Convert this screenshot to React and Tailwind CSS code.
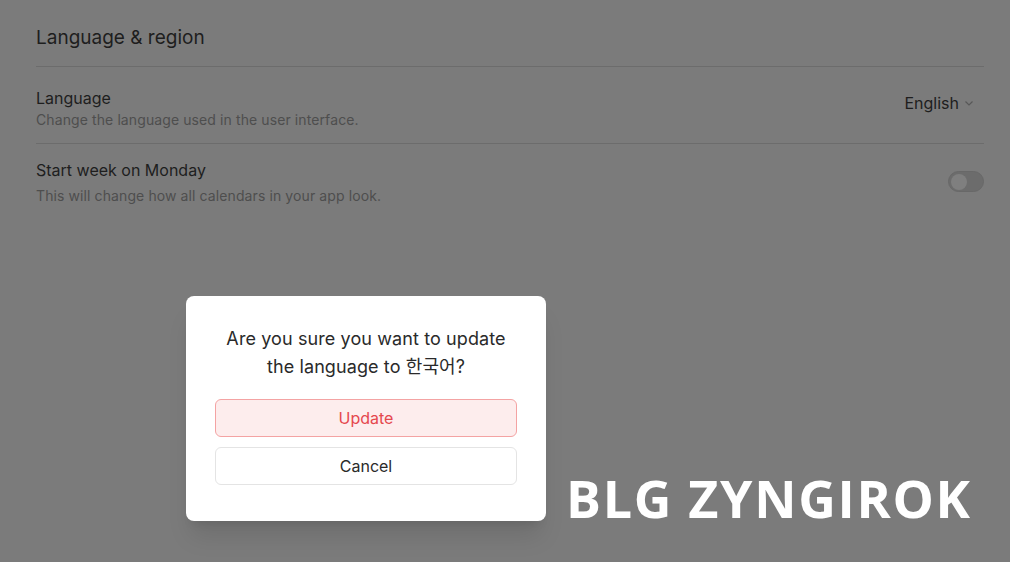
export default function App() {
  return (
    <div className="relative h-[562px] w-[1010px] overflow-hidden bg-[#7b7b7b] font-['Inter','Noto_Sans_CJK_KR',sans-serif]">
      {/* Settings page (behind the overlay) */}
      <div className="pl-9 pr-[26px] pt-[25px]">
        <h2 className="text-[19px] leading-[25px] text-[#1e1e1e]">Language &amp; region</h2>
        <div className="mt-[16px] border-t border-[#6c6c6c]" />

        <div className="flex items-start justify-between pt-[21px] pb-[14px]">
          <div>
            <div className="text-[16px] leading-[21px] text-[#1e1e1e]">Language</div>
            <div className="mt-[2px] text-[14px] leading-[18px] tracking-[0.1px] text-[#4e4e4e]">Change the language used in the user interface.</div>
          </div>
          <div className="mt-[3px] mr-[10px] flex items-center gap-[5px] text-[16px] text-[#1e1e1e]">
            English
            <svg width="10" height="10" viewBox="0 0 10 10" fill="none" stroke="#585858" strokeWidth="1.2">
              <path d="M1.5 3.5 5 7l3.5-3.5" />
            </svg>
          </div>
        </div>
        <div className="border-t border-[#6c6c6c]" />

        <div className="flex items-start justify-between pt-[16px]">
          <div>
            <div className="text-[16px] leading-[21px] text-[#1e1e1e]">Start week on Monday</div>
            <div className="mt-[6px] text-[14px] leading-[18px] tracking-[0.1px] text-[#4e4e4e]">This will change how all calendars in your app look.</div>
          </div>
          <div className="mt-[11px] flex h-[21px] w-[36px] items-center rounded-full border border-[#686868] bg-[#6c6c6c] px-[2px]">
            <div className="h-[16px] w-[16px] rounded-full bg-[#7f7f7f]" />
          </div>
        </div>
      </div>

      {/* Confirm dialog */}
      <div className="absolute left-[186px] top-[296px] w-[360px] rounded-lg bg-white px-[29px] pt-[29px] pb-[36px] shadow-xl">
        <p className="text-center text-[18px] leading-[28px] tracking-[0.1px] text-[#2a2a2a]">
          Are you sure you want to update
          <br />
          the language to 한국어?
        </p>
        <div className="mt-[18px] flex flex-col gap-[10px]">
          <button className="h-[38px] rounded-md border border-[#f4a3a3] bg-[#fdeded] text-[16px] text-[#e5484d]">Update</button>
          <button className="h-[38px] rounded-md border border-[#e4e4e4] bg-white text-[16px] text-[#2a2a2a]">Cancel</button>
        </div>
      </div>

      {/* Watermark */}
      <div className="absolute left-[566px] top-[466px] font-['Open_Sans',sans-serif] text-[52px] font-bold leading-[64px] tracking-[1.7px] text-white">
        BLG ZYNGIROK
      </div>
    </div>
  )
}
